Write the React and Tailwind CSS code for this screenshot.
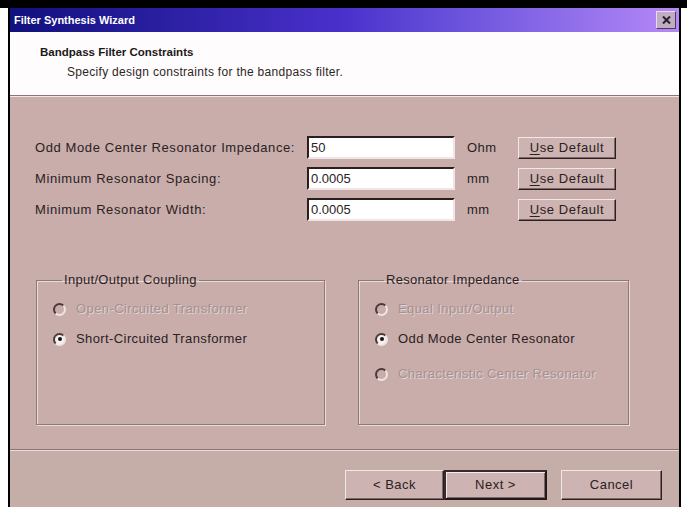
import { useState } from "react";

const font = { fontFamily: "'Liberation Sans', Arial, sans-serif" };

// raised 3D push button in classic dialog style
const PushButton = ({ children, isDefault, className = "" }) => (
  <button
    className={`flex items-center justify-center bg-[#cdb3b1] text-[#2a2222] ${
      isDefault
        ? "border-2 border-t-[#3a2a2a] border-l-[#3a2a2a] border-r-[#241818] border-b-[#241818] shadow-[inset_1px_1px_0_#f4eaea,inset_-1px_-1px_0_#7c6868]"
        : "border border-t-[#f2e8e8] border-l-[#f2e8e8] border-r-[#2c2020] border-b-[#2c2020] shadow-[inset_-1px_-1px_0_#7c6868]"
    } ${className}`}
  >
    {children}
  </button>
);

const Radio = ({ label, checked, disabled, className = "" }) => (
  <div className={`flex items-center h-[16px] ${className}`}>
    <span
      className={`w-[13px] h-[13px] rounded-full border-2 border-t-[#4a3838] border-l-[#4a3838] border-r-[#efe4e4] border-b-[#efe4e4] flex items-center justify-center ${
        disabled ? "bg-transparent" : "bg-[#f6f0f0]"
      }`}
    >
      {checked && <span className="w-[4px] h-[4px] rounded-full bg-[#1a1414]" />}
    </span>
    <span
      className={`ml-[10px] text-[13px] tracking-[0.4px] ${
        disabled ? "text-[#a69191] [text-shadow:1px_1px_0_#e2d4d4]" : "text-[#2a2222]"
      }`}
    >
      {label}
    </span>
  </div>
);

const GroupBox = ({ title, width, children }) => (
  <fieldset
    className={`${width} h-[151px] border border-[#8e7878] shadow-[1px_1px_0_#eadcdc,inset_1px_1px_0_#eadcdc] pl-[16px] pt-[15px]`}
  >
    <legend className="ml-[9px] px-[2px] text-[13px] tracking-[0.3px] text-[#2a2222] leading-[12px]">{title}</legend>
    <div className="flex flex-col gap-[14px]">{children}</div>
  </fieldset>
);

const fields = [
  { label: "Odd Mode Center Resonator Impedance:", value: "50", unit: "Ohm" },
  { label: "Minimum Resonator Spacing:", value: "0.0005", unit: "mm" },
  { label: "Minimum Resonator Width:", value: "0.0005", unit: "mm" },
];

export default function App() {
  const [values] = useState(fields.map(f => f.value));

  return (
    <div className="w-[687px] h-[507px] bg-white flex flex-col overflow-hidden" style={font}>
      <div className="h-[8px] bg-black shrink-0" />
      <div className="flex flex-1 min-h-0">
        <div className="w-[8px] bg-white" />
        <div className="flex-1 flex flex-col border-l-2 border-r-2 border-black bg-[#c9adab]">
          {/* Title bar */}
          <div className="h-[24px] shrink-0 flex items-center justify-between pl-[4px] pr-[3px] bg-gradient-to-r from-[#10107e] via-[#4a30cc] to-[#b688f8]">
            <span className="text-white font-bold text-[11px]">Filter Synthesis Wizard</span>
            <span className="w-[20px] h-[18px] bg-[#c0acc4] border border-t-[#e6dcec] border-l-[#e6dcec] border-r-[#4a3c4c] border-b-[#4a3c4c] flex items-center justify-center">
              <svg width="9" height="8" viewBox="0 0 9 8">
                <path d="M1 0.5 L8 7.5 M8 0.5 L1 7.5" stroke="#2a2020" strokeWidth="2" />
              </svg>
            </span>
          </div>

          {/* Header */}
          <div className="h-[64px] shrink-0 bg-[#fefcfc] pl-[30px] pt-[12px] border-b border-[#8a7474]">
            <div className="font-bold text-[11.5px] text-[#1e1818]">Bandpass Filter Constraints</div>
            <div className="ml-[27px] mt-[2px] text-[12px] tracking-[0.3px] text-[#2e2626]">
              Specify design constraints for the bandpass filter.
            </div>
          </div>
          <div className="h-px bg-[#f2e6e6]" />

          {/* Body */}
          <div className="flex-1 flex flex-col pl-[25px] pt-[39px]">
            <div className="flex flex-col gap-[8px]">
              {fields.map((f, i) => (
                <div key={f.label} className="flex items-center h-[23px]">
                  <span className="w-[272px] text-[13px] text-[#2a2222] tracking-[0.6px]">{f.label}</span>
                  <div className="w-[148px] h-[23px] bg-white border-2 border-t-[#2a1e1e] border-l-[#2a1e1e] border-r-[#f0e4e4] border-b-[#f0e4e4] flex items-center pl-[2px] text-[13px] text-[#2a2222]">
                    {values[i]}
                  </div>
                  <span className="w-[63px] pl-[12px] text-[13px] tracking-[0.5px] text-[#2a2222]">{f.unit}</span>
                  <PushButton className="w-[98px] h-[22px] text-[13px] tracking-[0.6px]">
                    <span className="underline decoration-1 underline-offset-2">U</span>se Default
                  </PushButton>
                </div>
              ))}
            </div>

            <div className="flex mt-[53px] pl-[1px] gap-[33px]">
              <GroupBox title="Input/Output Coupling" width="w-[289px]">
                <Radio label="Open-Circuited Transformer" disabled />
                <Radio label="Short-Circuited Transformer" checked />
              </GroupBox>
              <GroupBox title="Resonator Impedance" width="w-[271px]">
                <Radio label="Equal Input/Output" disabled />
                <Radio label="Odd Mode Center Resonator" checked />
                <Radio label="Characteristic Center Resonator" disabled className="mt-[5px]" />
              </GroupBox>
            </div>
          </div>

          {/* Footer */}
          <div className="h-px bg-[#8a7474]" />
          <div className="h-px bg-[#eadcdc]" />
          <div className="h-[56px] shrink-0 bg-[#c5ada8] flex items-start justify-end pt-[19px] pr-[17px]">
            <PushButton className="w-[99px] h-[30px] text-[13px] tracking-[0.5px]">&lt; Back</PushButton>
            <PushButton isDefault className="w-[103px] h-[30px] text-[13px] tracking-[0.5px]">Next &gt;</PushButton>
            <PushButton className="w-[101px] h-[30px] text-[13px] tracking-[0.5px] ml-[14px]">Cancel</PushButton>
          </div>
        </div>
        <div className="w-[6px] bg-white" />
      </div>
    </div>
  );
}
